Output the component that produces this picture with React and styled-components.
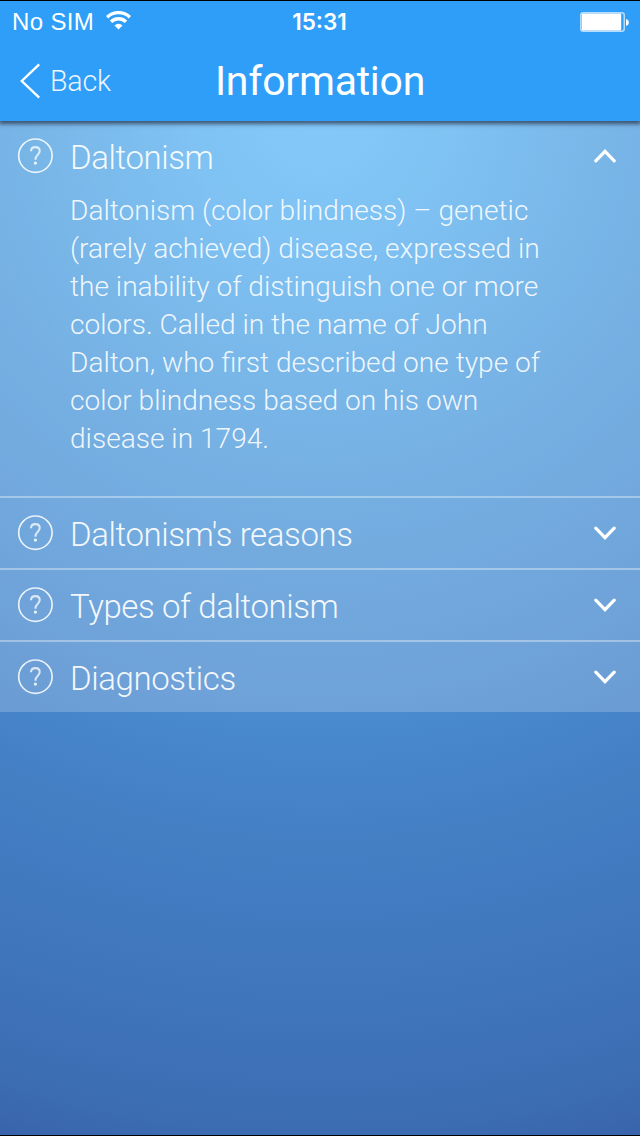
import React from 'react';
import styled, { createGlobalStyle } from 'styled-components';

const sections = [
    {
        title: 'Daltonism',
        lines: [
            'Daltonism (color blindness) – genetic',
            '(rarely achieved) disease, expressed in',
            'the inability of distinguish one or more',
            'colors. Called in the name of John',
            'Dalton, who first described one type of',
            'color blindness based on his own',
            'disease in 1794.',
        ],
    },
    { title: "Daltonism's reasons" },
    { title: 'Types of daltonism' },
    { title: 'Diagnostics' },
];

function WifiIcon() {
    return (
        <svg width="25" height="19" viewBox="0 0 25 19" fill="none" stroke="#fff" strokeWidth="3.3">
            <path d="M1.1 6.2a16.4 16.4 0 0 1 22.8 0" />
            <path d="M5 10.8a10.8 10.8 0 0 1 15 0" />
            <path d="M12.5 18.4l-4-4a5.8 5.8 0 0 1 8 0z" fill="#fff" stroke="none" />
        </svg>
    );
}

function BatteryIcon() {
    return (
        <svg width="49" height="20" viewBox="0 0 49 20" fill="none">
            <rect x="0.75" y="0.75" width="43.5" height="18.5" rx="2.5" stroke="#fff" strokeOpacity="0.65" strokeWidth="1.5" />
            <rect x="1.8" y="1.5" width="39.4" height="17" rx="1" fill="#fff" />
            <path d="M46 7c1.8.4 2.8 1.6 2.8 3.4s-1 3-2.8 3.4z" fill="#fff" />
        </svg>
    );
}

function QuestionIcon() {
    return (
        <svg width="36" height="36" viewBox="0 0 36 36" fill="none" stroke="#fff" strokeOpacity="0.85" strokeWidth="1.7">
            <circle cx="18.4" cy="17.7" r="16.7" />
            <path d="M14 13.2c0-2.6 1.6-4.1 4.4-4.1 2.8 0 4.3 1.5 4.3 3.9 0 1.8-.8 2.7-2.1 4-1.5 1.4-2.2 2.3-2.2 4.7" strokeOpacity="0.75" strokeWidth="2.1" />
            <circle cx="18.4" cy="25.1" r="1.6" fill="#fff" fillOpacity="0.85" stroke="none" />
        </svg>
    );
}

function App() {
    const [open, setOpen] = React.useState(0);

    return (
        <Screen>
            <GlobalStyle />
            <Header>
                <StatusBar>
                    <Carrier>
                        No SIM
                        <WifiIcon />
                    </Carrier>
                    <Time>15:31</Time>
                    <Battery>
                        <BatteryIcon />
                    </Battery>
                </StatusBar>
                <NavBar>
                    <BackButton>
                        <svg width="20" height="36" viewBox="0 0 20 36" fill="none" stroke="#fff" strokeWidth="2.4">
                            <path d="M19.2 1.4L1.8 18l17.4 16.6" />
                        </svg>
                        <span>Back</span>
                    </BackButton>
                    <Title>Information</Title>
                </NavBar>
            </Header>
            <List>
                {sections.map((section, i) => (
                    <Section key={section.title}>
                        <SectionHead $first={i === 0} onClick={() => setOpen(open === i ? -1 : i)}>
                            <QuestionIcon />
                            <SectionTitle>{section.title}</SectionTitle>
                            <Chevron $up={open === i} viewBox="0 0 22 14">
                                <path d="M1.8 2.2l9.2 9.4 9.2-9.4" />
                            </Chevron>
                        </SectionHead>
                        {open === i && section.lines && (
                            <Text>
                                {section.lines.map((line) => <p key={line}>{line}</p>)}
                            </Text>
                        )}
                    </Section>
                ))}
            </List>
        </Screen>
    );
}

const GlobalStyle = createGlobalStyle`
    * {
        box-sizing: border-box;
    }

    body {
        margin: 0;
    }
`;

const Screen = styled.div`
    width: 640px;
    height: 1136px;
    overflow: hidden;
    border-top: 1px solid #000;
    border-bottom: 1px solid #000;
    font-family: Roboto, sans-serif;
    color: #fff;
    background: radial-gradient(
        circle 1080px at 320px 110px,
        #65bcf9 0,
        #60b5f2 110px,
        #559fde 340px,
        #4a8bcf 590px,
        #447fc4 730px,
        #3f75bb 900px,
        #3c6db3 1010px,
        #3963ab 1080px
    );
`;

const Header = styled.header`
    position: relative;
    height: 120px;
    background: #2e9ef9;
    box-shadow: 0 2px 4px 1px rgba(40, 50, 70, 0.75);
`;

const StatusBar = styled.div`
    height: 40px;
    display: grid;
    grid-template-columns: 1fr auto 1fr;
    align-items: center;
    padding: 2px 11px 0 12px;
    font-family: "Liberation Sans", sans-serif;
    font-size: 24px;
`;

const Carrier = styled.div`
    display: flex;
    align-items: center;
    gap: 12px;
    letter-spacing: 0.35px;

    svg {
        margin-bottom: 3px;
    }
`;

const Time = styled.div`
    padding-right: 2px;
    font-family: Inter, sans-serif;
    font-size: 22.5px;
    font-weight: 600;
    line-height: 26px;
`;

const Battery = styled.div`
    display: flex;
    justify-content: flex-end;
`;

const NavBar = styled.div`
    height: 80px;
    display: grid;
    grid-template-columns: 1fr auto 1fr;
    align-items: center;
    padding: 0 20px;
`;

const BackButton = styled.div`
    display: flex;
    align-items: center;
    gap: 10px;
    font-size: 28.6px;
    font-weight: 300;
    letter-spacing: -0.2px;
    cursor: pointer;

    span {
        opacity: 0.9;
    }
`;

const Title = styled.h1`
    margin: 0;
    font-size: 41px;
    font-weight: 400;
    letter-spacing: -0.25px;
`;

const List = styled.div`
    background: rgba(255, 255, 255, 0.2);
`;

const Section = styled.section`
    & + & {
        border-top: 2px solid rgba(255, 255, 255, 0.36);
    }
`;

const SectionHead = styled.div`
    height: ${({ $first }) => $first ? '69px' : '70px'};
    display: flex;
    align-items: center;
    padding: 0 24px 0 17px;
    cursor: pointer;
`;

const SectionTitle = styled.h2`
    flex: 1;
    margin: 3px 0 0 17px;
    font-size: 33px;
    font-weight: 300;
    letter-spacing: -0.4px;
    opacity: 0.92;
`;

const Chevron = styled.svg`
    width: 22px;
    height: 14px;
    fill: none;
    stroke: #fff;
    stroke-width: 3.2;
    stroke-linecap: round;
    transform: ${({ $up }) => $up ? 'rotate(180deg)' : 'none'};
`;

const Text = styled.div`
    height: 306px;
    padding: 2px 0 0 70px;
    font-size: 28.1px;
    font-weight: 300;
    line-height: 38px;
    white-space: nowrap;
    color: rgba(255, 255, 255, 0.9);

    p {
        margin: 0;
    }
`;

export default App;
